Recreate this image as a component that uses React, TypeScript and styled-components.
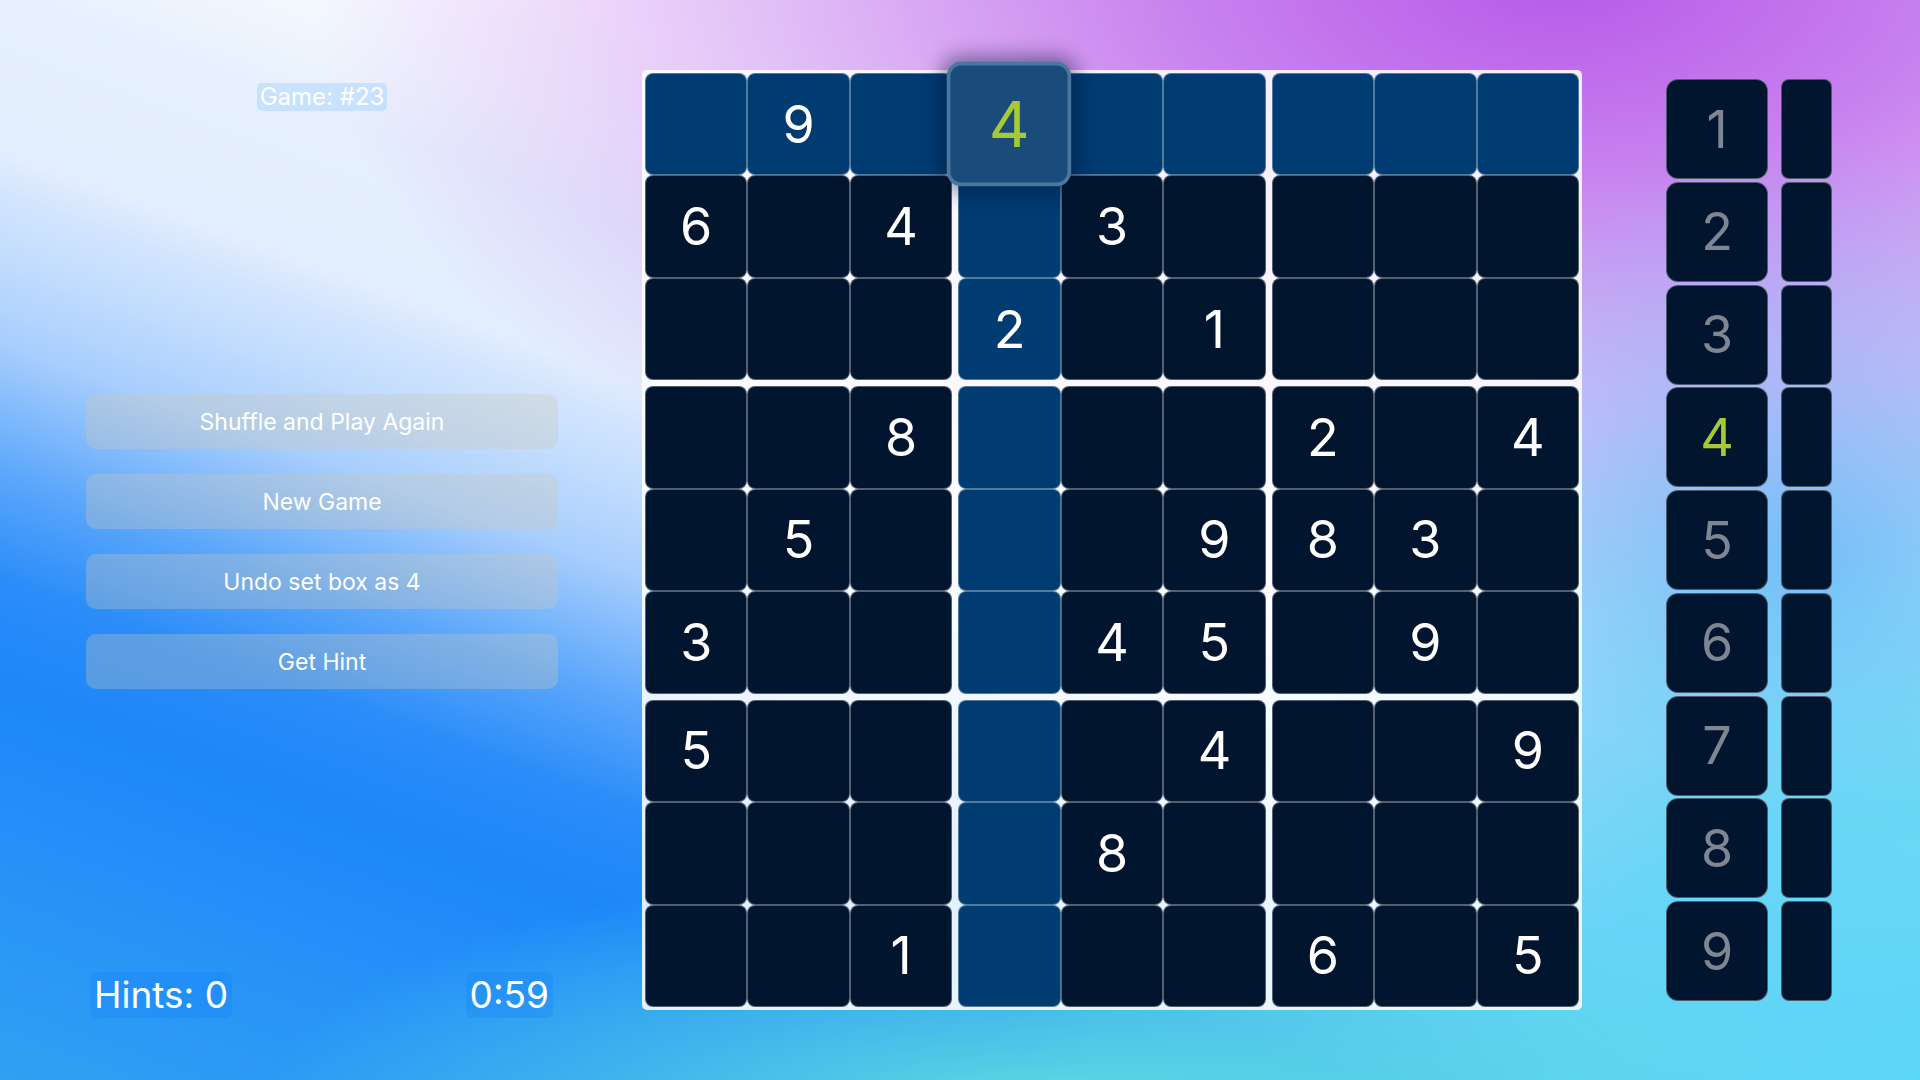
import React from "react";
import styled, { createGlobalStyle, css } from "styled-components";

const COLORS = {
  white: "#ffffff",
  cell: "#02152e",
  cellLine: "rgba(255, 255, 255, 0.32)",
  highlight: "#003b72",
  selected: "#1b4b7b",
  selectedLine: "#4b769e",
  green: "#a5ca36",
  muted: "#7e8694",
};

const GlobalStyle = createGlobalStyle`
  html, body {
    margin: 0;
    padding: 0;
    overflow: hidden;
  }
  * {
    box-sizing: border-box;
  }
  body {
    font-family: Inter, "Noto Sans", "Liberation Sans", sans-serif;
  }
`;

const S = {
  Page: styled.div`
    width: 1920px;
    height: 1080px;
    display: flex;
    align-items: center;
    gap: 84px;
    padding: 0 88px 0 86px;
    background:
      radial-gradient(ellipse 800px 260px at 1050px 1120px, rgba(100, 228, 222, 0.95), rgba(100, 228, 222, 0)),
      radial-gradient(ellipse 900px 700px at 1920px 1080px, rgba(92, 214, 246, 1) 0%, rgba(92, 214, 246, 0.85) 40%, rgba(92, 214, 246, 0) 100%),
      radial-gradient(ellipse 500px 420px at 1800px 560px, rgba(125, 175, 247, 0.95), rgba(125, 175, 247, 0)),
      radial-gradient(ellipse 1250px 640px at 1560px -20px, rgba(184, 90, 233, 1) 0%, rgba(184, 90, 233, 0.75) 30%, rgba(184, 90, 233, 0.35) 65%, rgba(184, 90, 233, 0) 100%),
      linear-gradient(200deg, #f4f0fe 0%, #fbfbff 28%, #f2f7fe 34%, #e6f0fd 39%, #e2edfe 48%, #d3e5fd 50%, #c8e0fd 52.4%, #a8cefd 58.5%, #5aa6fb 66%, #2a8cf8 72%, #1d87f8 78%, #2590f8 86%, #30a0f2 100%);
  `,
  Side: styled.div`
    width: 472px;
    height: 100%;
    flex-shrink: 0;
    display: flex;
    flex-direction: column;
    justify-content: space-between;
    align-items: center;
    padding: 83px 0 62px;
  `,
  GameTag: styled.span`
    font-size: 24px;
    line-height: 28px;
    padding: 0 3px;
    border-radius: 5px;
    color: ${COLORS.white};
    background: rgba(190, 220, 255, 0.75);
  `,
  Actions: styled.div`
    width: 100%;
    display: flex;
    flex-direction: column;
    gap: 25px;
  `,
  ActionButton: styled.button`
    height: 55px;
    width: 100%;
    border: none;
    border-radius: 10px;
    background: rgba(205, 200, 185, 0.32);
    color: ${COLORS.white};
    font-family: inherit;
    font-size: 23px;
    font-weight: 400;
  `,
  Footer: styled.div`
    width: 100%;
    display: flex;
    justify-content: space-between;
    padding: 0 5px 0 4px;
  `,
  Stat: styled.span`
    font-size: 37px;
    line-height: 46px;
    height: 46px;
    padding: 0 4px;
    border-radius: 6px;
    color: ${COLORS.white};
    background: rgba(20, 130, 250, 0.3);
  `,
  Board: styled.div`
    width: 940px;
    height: 940px;
    flex-shrink: 0;
    padding: 3px;
    display: grid;
    grid-template-columns: repeat(3, 1fr);
    grid-template-rows: repeat(3, 1fr);
    gap: 6px;
    border-radius: 5px;
    background: rgba(255, 255, 255, 0.86);
  `,
  Box: styled.div`
    display: grid;
    grid-template-columns: repeat(3, 1fr);
    grid-template-rows: repeat(3, 1fr);
  `,
  Cell: styled.div<{ $highlight: boolean; $selected: boolean }>`
    display: flex;
    align-items: center;
    justify-content: center;
    font-size: 52px;
    color: ${COLORS.white};
    background: ${(p) => (p.$highlight ? COLORS.highlight : COLORS.cell)};
    border: 1px solid ${COLORS.cellLine};
    border-radius: 8px;
    ${(p) =>
      p.$selected &&
      css`
        position: relative;
        z-index: 2;
        transform: scale(1.22);
        background: ${COLORS.selected};
        border: 3px solid ${COLORS.selectedLine};
        border-radius: 12px;
        color: ${COLORS.green};
        box-shadow: 0 0 16px 4px rgba(0, 20, 50, 0.45);
      `}
  `,
  Pad: styled.div`
    flex-shrink: 0;
    display: grid;
    grid-template-columns: 102px 51px;
    grid-auto-rows: 100px;
    column-gap: 13px;
    row-gap: 2.75px;
  `,
  PadKey: styled.div<{ $active: boolean }>`
    display: flex;
    align-items: center;
    justify-content: center;
    font-size: 52px;
    color: ${(p) => (p.$active ? COLORS.green : COLORS.muted)};
    background: ${COLORS.cell};
    border: 1px solid rgba(255, 255, 255, 0.3);
    border-radius: 12px;
  `,
  PadNote: styled.div`
    background: ${COLORS.cell};
    border: 1px solid rgba(255, 255, 255, 0.3);
    border-radius: 8px;
  `,
};

// 0 = empty
const PUZZLE: number[][] = [
  [0, 9, 0, 4, 0, 0, 0, 0, 0],
  [6, 0, 4, 0, 3, 0, 0, 0, 0],
  [0, 0, 0, 2, 0, 1, 0, 0, 0],
  [0, 0, 8, 0, 0, 0, 2, 0, 4],
  [0, 5, 0, 0, 0, 9, 8, 3, 0],
  [3, 0, 0, 0, 4, 5, 0, 9, 0],
  [5, 0, 0, 0, 0, 4, 0, 0, 9],
  [0, 0, 0, 0, 8, 0, 0, 0, 0],
  [0, 0, 1, 0, 0, 0, 6, 0, 5],
];

const SELECTED = { row: 0, col: 3 };

const ACTIONS = ["Shuffle and Play Again", "New Game", "Undo set box as 4", "Get Hint"];

export default function App() {
  const boxes = Array.from({ length: 9 }, (_, b) => b);
  return (
    <>
      <GlobalStyle />
      <S.Page>
        <S.Side>
          <S.GameTag>Game: #23</S.GameTag>
          <S.Actions>
            {ACTIONS.map((label) => (
              <S.ActionButton key={label}>{label}</S.ActionButton>
            ))}
          </S.Actions>
          <S.Footer>
            <S.Stat>Hints: 0</S.Stat>
            <S.Stat>0:59</S.Stat>
          </S.Footer>
        </S.Side>

        <S.Board>
          {boxes.map((b) => {
            const br = Math.floor(b / 3) * 3;
            const bc = (b % 3) * 3;
            return (
              <S.Box key={b}>
                {Array.from({ length: 9 }, (_, i) => {
                  const row = br + Math.floor(i / 3);
                  const col = bc + (i % 3);
                  const value = PUZZLE[row][col];
                  const selected = row === SELECTED.row && col === SELECTED.col;
                  const highlight = row === SELECTED.row || col === SELECTED.col;
                  return (
                    <S.Cell key={i} $highlight={highlight} $selected={selected}>
                      {value || ""}
                    </S.Cell>
                  );
                })}
              </S.Box>
            );
          })}
        </S.Board>

        <S.Pad>
          {Array.from({ length: 9 }, (_, i) => (
            <React.Fragment key={i}>
              <S.PadKey $active={i + 1 === 4}>{i + 1}</S.PadKey>
              <S.PadNote />
            </React.Fragment>
          ))}
        </S.Pad>
      </S.Page>
    </>
  );
}
